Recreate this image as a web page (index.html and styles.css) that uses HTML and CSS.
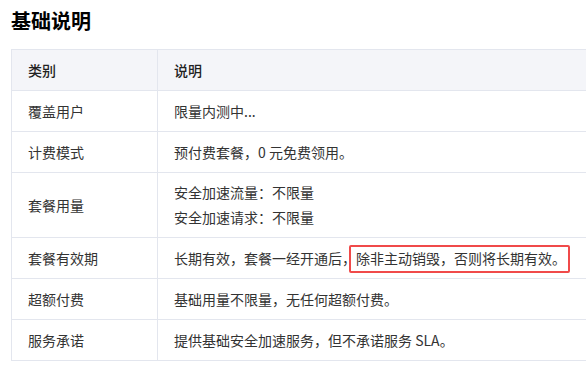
FILE: index.html
```html
<!DOCTYPE html>
<html lang="zh-CN">
<head>
<meta charset="utf-8">
<link rel="stylesheet" href="styles.css">
</head>
<body>
<div class="page">
  <h2 class="title">基础说明</h2>
  <div class="clip">
  <table class="spec">
    <thead>
      <tr><th class="c1">类别</th><th class="c2">说明</th></tr>
    </thead>
    <tbody>
      <tr><td>覆盖用户</td><td>限量内测中...</td></tr>
      <tr><td>计费模式</td><td>预付费套餐，0 元免费领用。</td></tr>
      <tr class="tall"><td>套餐用量</td><td><div class="line">安全加速流量：不限量</div><div class="line">安全加速请求：不限量</div></td></tr>
      <tr><td>套餐有效期</td><td>长期有效，套餐一经开通后，<span class="mark">除非主动销毁，否则将长期有效。</span></td></tr>
      <tr><td>超额付费</td><td>基础用量不限量，无任何超额付费。</td></tr>
      <tr><td>服务承诺</td><td>提供基础安全加速服务，但不承诺服务 SLA。</td></tr>
    </tbody>
  </table>
  </div>
</div>
</body>
</html>
```
FILE: styles.css
```css
html, body {
  margin: 0;
  padding: 0;
  background: #fff;
  overflow: hidden;
}
body {
  font-family: "Noto Sans CJK SC", "Noto Sans", sans-serif;
  color: #333;
}
.page {
  padding: 8px 0 0 11px;
}
.title {
  margin: 0 0 15px 0;
  font-size: 20px;
  line-height: 26px;
  font-weight: 700;
  color: #000;
}
.clip {
  overflow: hidden;
}
.spec {
  border-collapse: collapse;
  width: 640px;
  font-size: 14px;
  table-layout: fixed;
}
.spec th, .spec td {
  border: 1px solid #e3e6ee;
  text-align: left;
  padding: 0 16px;
  height: 40px;
  vertical-align: middle;
}
.spec th {
  background: #f4f5f9;
  font-weight: 500;
  color: #222;
}
.c1 { width: 113px; }
.spec tr.tall td {
  height: 64px;
}
.line {
  line-height: 25px;
}
.mark {
  position: relative;
}
.mark::after {
  content: "";
  position: absolute;
  left: -7px;
  right: -4px;
  top: -3px;
  bottom: -5px;
  border: 2px solid #f04a4a;
  border-radius: 2px;
}
```
